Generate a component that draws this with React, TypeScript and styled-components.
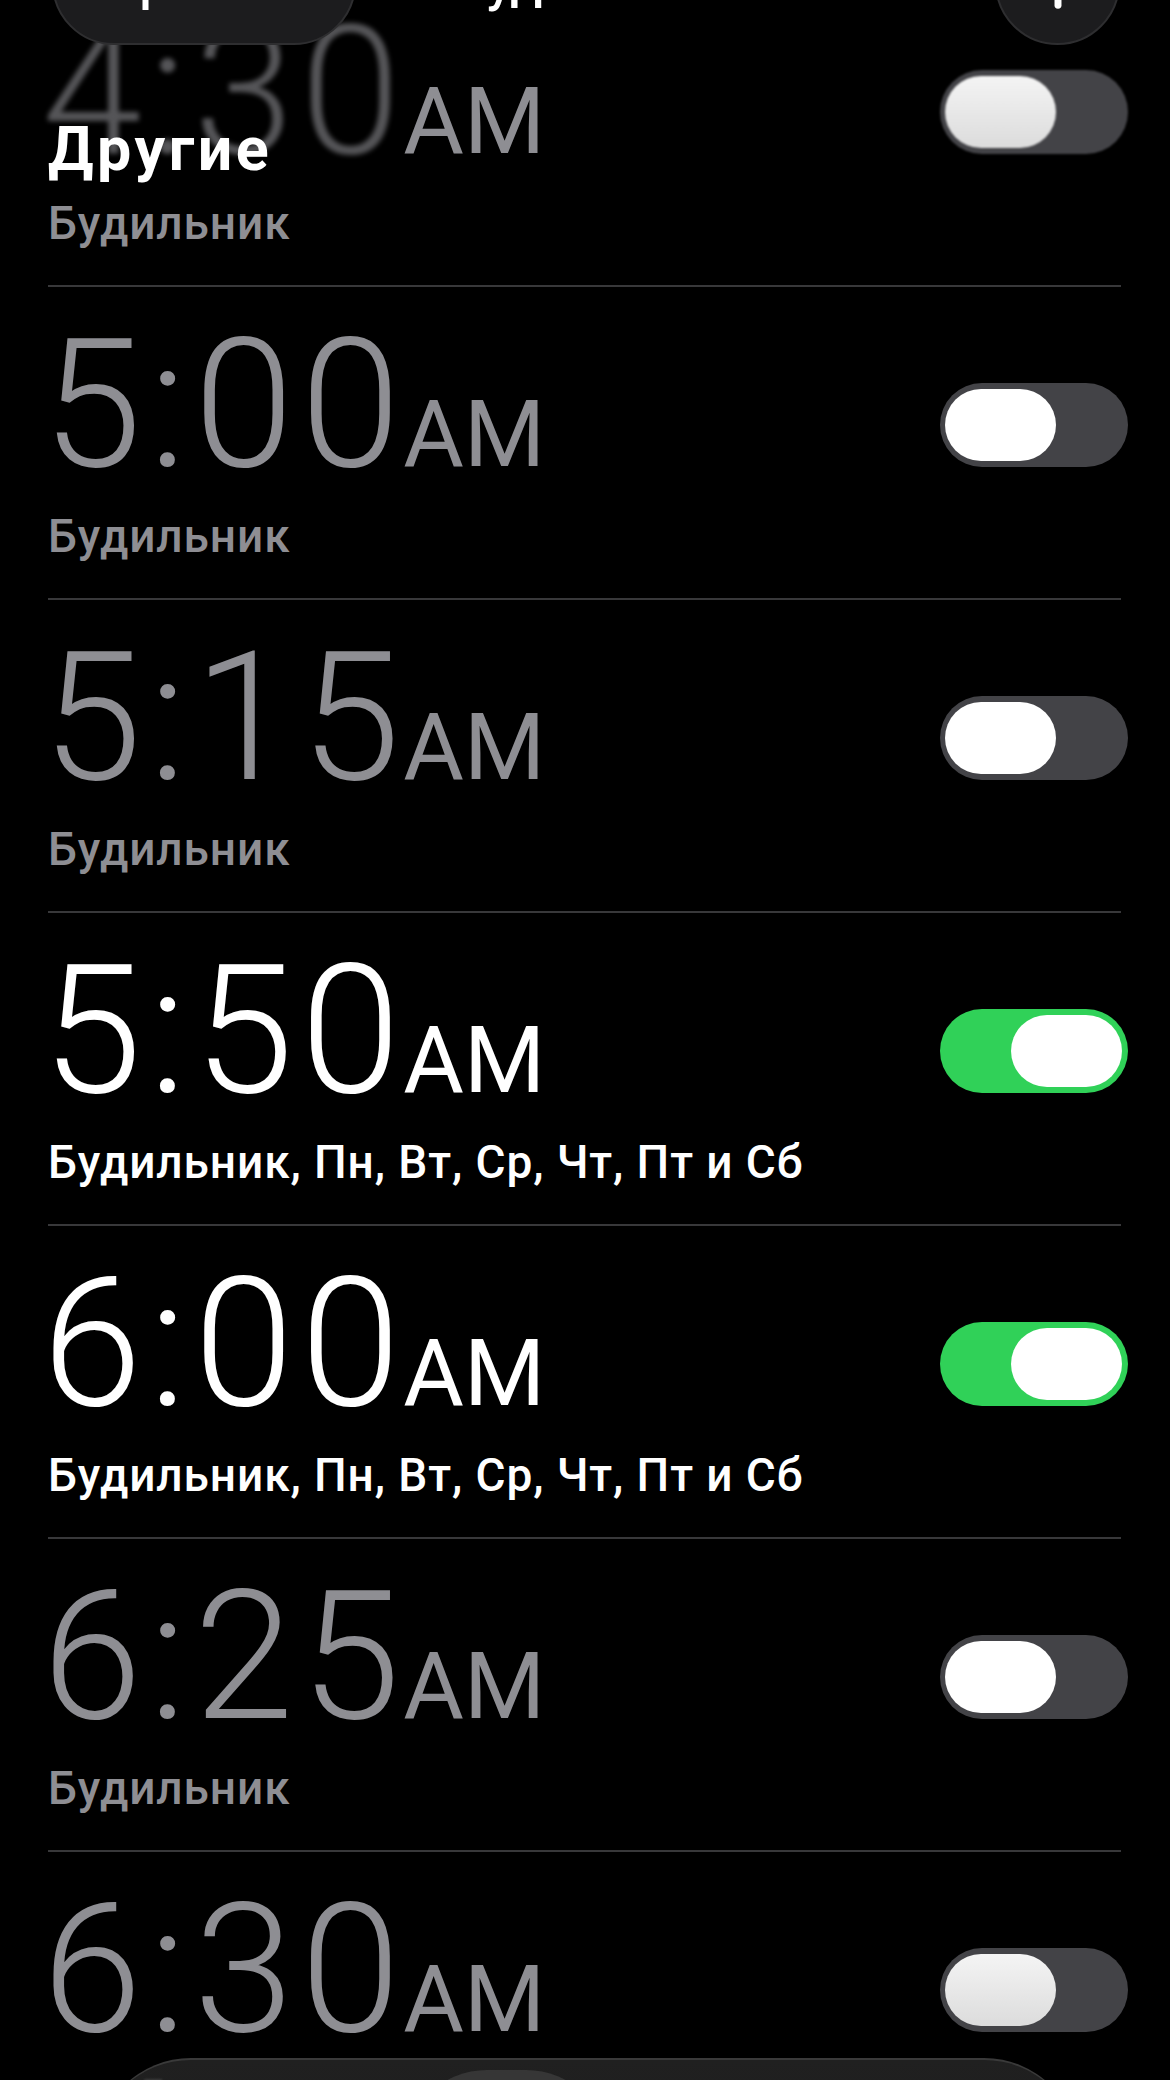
import React from 'react';
import styled, { createGlobalStyle, css } from 'styled-components';
import { Plus } from 'lucide-react';

type Alarm = {
    time: string;
    label: string;
    on: boolean;
};

const alarms: Alarm[] = [
    { time: '4:30', label: 'Будильник', on: false },
    { time: '5:00', label: 'Будильник', on: false },
    { time: '5:15', label: 'Будильник', on: false },
    { time: '5:50', label: 'Будильник, Пн, Вт, Ср, Чт, Пт и Сб', on: true },
    { time: '6:00', label: 'Будильник, Пн, Вт, Ср, Чт, Пт и Сб', on: true },
    { time: '6:25', label: 'Будильник', on: false },
    { time: '6:30', label: 'Будильник', on: false },
];

const App = () => (
    <>
        <GlobalStyle />
        <Screen>
            <List>
                {alarms.map((alarm, i) => (
                    <Row key={alarm.time}>
                        <Info>
                            <Time $on={alarm.on}>
                                <Digits $faded={i === 0}>{alarm.time}</Digits>
                                <Meridiem>AM</Meridiem>
                            </Time>
                            <Label $on={alarm.on}>{alarm.label}</Label>
                        </Info>
                        <Toggle $on={alarm.on} $faded={i === 0}>
                            <Knob $on={alarm.on} $glass={i === 0 || i === alarms.length - 1} />
                        </Toggle>
                    </Row>
                ))}
            </List>

            <NavBar>
                <EditButton>Править</EditButton>
                <NavTitle>Будильник</NavTitle>
                <AddButton>
                    <Plus size={76} strokeWidth={2.2} color="#fff" />
                </AddButton>
            </NavBar>

            <SectionTitle>Другие</SectionTitle>

            <TabBar>
                <TabGhost>Будильник</TabGhost>
                <TabSelected />
            </TabBar>
        </Screen>
    </>
);

const GlobalStyle = createGlobalStyle`
    body {
        margin: 0;
        background: #000;
        font-family: Roboto, "Liberation Sans", sans-serif;
    }
`;

const Screen = styled.div`
    position: relative;
    width: 1170px;
    height: 2080px;
    overflow: hidden;
    background: #000;
`;

const List = styled.div`
    display: flex;
    flex-direction: column;
    margin-top: -26px;
`;

const Row = styled.div`
    display: flex;
    justify-content: space-between;
    align-items: flex-start;
    height: 313px;
    box-sizing: border-box;
    margin-left: 48px;
    width: 1073px;
    border-bottom: 2px solid #38383a;
`;

const Info = styled.div`
    display: flex;
    flex-direction: column;
`;

const Time = styled.div<{ $on: boolean }>`
    padding-top: 28px;
    height: 180px;
    line-height: 180px;
    white-space: nowrap;
    color: ${({ $on }) => ($on ? '#ffffff' : '#8e8e93')};
`;

const Digits = styled.span<{ $faded: boolean }>`
    display: inline-block;
    font-size: 180px;
    font-weight: 300;
    letter-spacing: 7px;
    margin-left: -6px;
    ${({ $faded }) =>
        $faded &&
        css`
            filter: blur(2.5px);
            opacity: 0.6;
        `}
`;

const Meridiem = styled.span`
    font-size: 93px;
    font-weight: 400;
    line-height: 1;
    margin-left: -4px;
`;

const Label = styled.div<{ $on: boolean }>`
    margin-top: 15px;
    font-size: 46px;
    font-weight: 500;
    line-height: 52px;
    letter-spacing: 0.9px;
    white-space: nowrap;
    color: ${({ $on }) => ($on ? '#ffffff' : '#8e8e93')};
`;

const Toggle = styled.div<{ $on: boolean; $faded: boolean }>`
    display: flex;
    justify-content: ${({ $on }) => ($on ? 'flex-end' : 'flex-start')};
    align-items: center;
    box-sizing: border-box;
    width: 188px;
    height: 84px;
    margin-top: 96px;
    margin-right: -7px;
    padding: 0 6px 0 5px;
    border-radius: 42px;
    background: ${({ $on }) => ($on ? '#30d158' : '#434347')};
    ${({ $faded }) =>
        $faded &&
        css`
            filter: blur(0.8px);
        `}
`;

const Knob = styled.div<{ $on: boolean; $glass: boolean }>`
    width: 111px;
    height: 72px;
    border-radius: 36px;
    background: ${({ $glass }) =>
        $glass ? 'linear-gradient(180deg, #f4f4f4 0%, #dcdcdc 100%)' : '#ffffff'};
`;

const NavBar = styled.div`
    position: absolute;
    top: -80px;
    left: 52px;
    right: 50px;
    display: grid;
    grid-template-columns: 1fr auto 1fr;
    align-items: center;
`;

const EditButton = styled.div`
    display: flex;
    align-items: center;
    justify-content: center;
    justify-self: start;
    box-sizing: border-box;
    width: 304px;
    height: 125px;
    border-radius: 62px;
    background: #1c1c1e;
    border: 2px solid #2e2e30;
    color: #fff;
    font-size: 50px;
    font-weight: 500;
`;

const NavTitle = styled.div`
    color: #fff;
    font-size: 52px;
    font-weight: 500;
`;

const AddButton = styled.div`
    display: flex;
    align-items: center;
    justify-content: center;
    justify-self: end;
    box-sizing: border-box;
    width: 125px;
    height: 125px;
    border-radius: 50%;
    background: #1c1c1e;
    border: 2px solid #2e2e30;
`;

const SectionTitle = styled.div`
    position: absolute;
    top: 119px;
    left: 48px;
    color: #fff;
    font-size: 61px;
    font-weight: 700;
    letter-spacing: 3.5px;
    line-height: 1;
`;

const TabBar = styled.div`
    position: absolute;
    top: 2058px;
    left: 96px;
    width: 983px;
    height: 190px;
    box-sizing: border-box;
    border-radius: 95px;
    background: linear-gradient(180deg, #202020 0%, #1a1a1a 100%);
    border-top: 2px solid #3a3a3a;
    overflow: hidden;
`;

const TabSelected = styled.div`
    position: absolute;
    top: 10px;
    left: 308px;
    width: 205px;
    height: 166px;
    border-radius: 83px;
    background: #363636;
`;

const TabGhost = styled.div`
    position: absolute;
    top: 12px;
    left: 46px;
    color: rgba(255, 255, 255, 0.13);
    font-size: 38px;
    font-weight: 700;
    filter: blur(1px);
`;

export default App;
